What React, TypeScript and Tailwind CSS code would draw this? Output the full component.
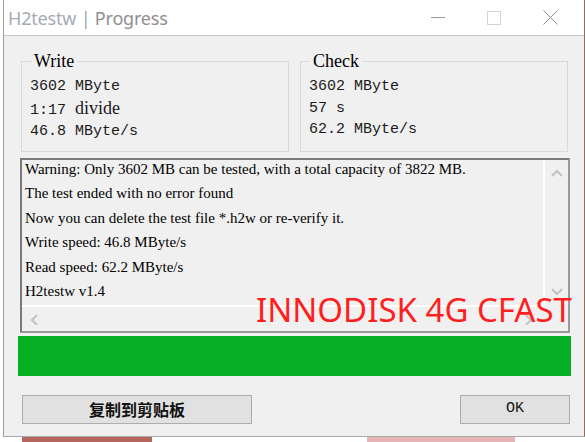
import { ReactNode } from "react";

const mono = { fontFamily: '"Liberation Mono", "Noto Sans CJK SC", monospace' };
const serif = { fontFamily: '"Liberation Serif", "Noto Sans CJK SC", serif' };

function Group({ title, children, className }: { title: string; children: ReactNode; className?: string }) {
  return (
    <fieldset className={`w-[268px] border border-[#d9d9d9] px-[8px] pt-[5px] pb-[8px] ${className ?? ""}`}>
      <legend className="ml-[1px] px-[3px] text-[18px] leading-[20px] text-black" style={serif}>
        {title}
      </legend>
      <div className="text-[15px] leading-[21.5px] text-[#1a1a1a]" style={mono}>
        {children}
      </div>
    </fieldset>
  );
}

function Chevron({ dir }: { dir: "up" | "down" | "left" | "right" }) {
  const d = {
    up: "M2 8 L7 3 L12 8",
    down: "M2 4 L7 9 L12 4",
    left: "M8 2 L3 7 L8 12",
    right: "M4 2 L9 7 L4 12",
  }[dir];
  return (
    <svg width="14" height="12" viewBox="0 0 14 12" className="block" fill="none" stroke="#c2c2c2" strokeWidth="2">
      <path d={d} />
    </svg>
  );
}

const logLines = [
  "Warning: Only 3602 MB can be tested, with a total capacity of 3822 MB.",
  "The test ended with no error found",
  "Now you can delete the test file *.h2w or re-verify it.",
  "Write speed: 46.8 MByte/s",
  "Read speed: 62.2 MByte/s",
  "H2testw v1.4",
];

export default function App() {
  return (
    <div className="relative w-[585px] h-[442px] overflow-hidden bg-white">
      <div className="ml-[3px] w-[582px] h-[437px] flex flex-col border-l border-[#9f9f9f] border-r border-r-[#8b6f60] border-b border-b-[#a8a8a8]">
        {/* title bar */}
        <div className="h-[36px] shrink-0 bg-white border-b border-[#c8c8c8] flex items-center relative">
          <div className="pl-[4px] text-[18px] leading-none tracking-[-0.2px]" style={{ fontFamily: '"Noto Sans", "Open Sans", sans-serif' }}>
            <span className="text-[#a5abb3]">H2testw</span>
            <span className="text-[#9aa6b8]"> | </span>
            <span className="text-[#8f8f8f]">Progress</span>
          </div>
          <div className="ml-auto flex items-center h-full">
            <div className="w-[56px] flex justify-center">
              <div className="w-[14px] h-px bg-[#9a9a9a]" />
            </div>
            <div className="w-[56px] flex justify-center">
              <div className="w-[14px] h-[14px] border border-[#d4d4d4]" />
            </div>
            <div className="w-[62px] flex justify-center pr-[6px]">
              <svg width="15" height="15" viewBox="0 0 15 15" stroke="#8a8a8a" strokeWidth="1">
                <path d="M0.5 0.5 L14.5 14.5 M14.5 0.5 L0.5 14.5" />
              </svg>
            </div>
          </div>
        </div>

        {/* content */}
        <div className="flex-1 bg-[#f0f0f0] flex flex-col">
          <div className="flex gap-[11px] pl-[17px] mt-[15px]">
            <Group title="Write">
              <div>3602 MByte</div>
              <div>
                1:17 <span className="text-[18px]" style={serif}>divide</span>
              </div>
              <div>46.8 MByte/s</div>
            </Group>
            <Group title="Check">
              <div>3602 MByte</div>
              <div>57 s</div>
              <div>62.2 MByte/s</div>
            </Group>
          </div>

          {/* log box */}
          <div className="ml-[16px] mt-[6px] w-[550px] h-[175px] border-2 border-t-[#7a7a7a] border-l-[#7a7a7a] border-r-[#999999] border-b-[#999999] grid grid-cols-[1fr_25px] grid-rows-[1fr_26px] overflow-hidden">
            <div className="overflow-hidden pl-[3px]">
              <div className="-mt-[3px] text-[15px] leading-[24.6px] text-black whitespace-nowrap" style={serif}>
                {logLines.map((l) => (
                  <div key={l}>{l}</div>
                ))}
              </div>
            </div>
            <div className="border-l-2 border-white flex flex-col items-center justify-between py-[8px]">
              <Chevron dir="up" />
              <Chevron dir="down" />
            </div>
            <div className="border-t-2 border-white flex items-center justify-between px-[7px]">
              <Chevron dir="left" />
              <Chevron dir="right" />
            </div>
            <div />
          </div>

          {/* progress */}
          <div className="ml-[14px] mt-[3px] w-[553px] h-[40px] bg-[#06b025]" />

          {/* buttons */}
          <div className="flex justify-between pl-[18px] pr-[14px] mt-[19px]">
            <button className="w-[230px] h-[29px] bg-[#e1e1e1] border border-[#adadad] text-[16px] font-bold text-[#111]" style={{ fontFamily: '"Noto Sans CJK SC", sans-serif' }}>
              复制到剪贴板
            </button>
            <button className="w-[110px] h-[29px] bg-[#e1e1e1] border border-[#adadad] text-[15px] text-[#111]" style={mono}>
              OK
            </button>
          </div>
        </div>
      </div>

      {/* desktop behind the window */}
      <div className="flex h-[5px]">
        <div className="ml-[22px] w-[130px] bg-[#b4655c]" />
        <div className="ml-[215px] w-[148px] bg-[#e6b4b6]" />
      </div>

      {/* red annotation over the dialog */}
      <div
        className="absolute left-[256px] top-[292px] text-[33px] leading-[36px] text-[#ff1f1f] whitespace-nowrap"
        style={{ fontFamily: '"Noto Sans", "Open Sans", sans-serif' }}
      >
        INNODISK 4G CFAST
      </div>
    </div>
  );
}
